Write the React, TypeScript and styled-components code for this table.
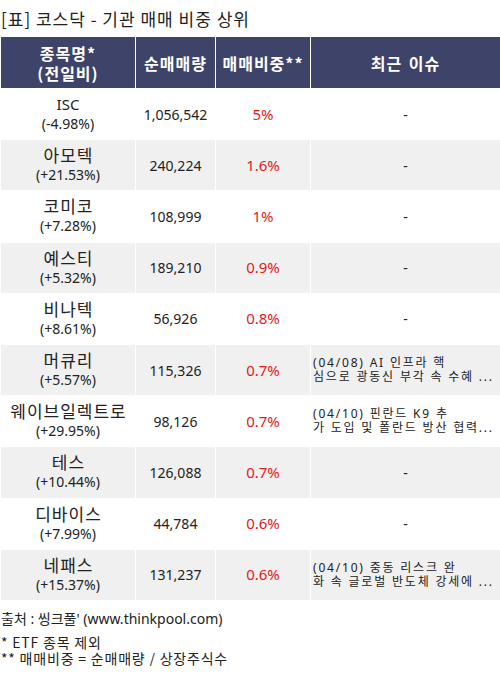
import React from "react";
import styled, { createGlobalStyle } from "styled-components";

const Global = createGlobalStyle`
  html, body { margin: 0; padding: 0; background: #fff; }
  body { font-family: "Noto Sans", "Noto Sans CJK KR", sans-serif; color: #222; }
`;

const Page = styled.div`
  width: 500px;
  padding-left: 1px;
  box-sizing: border-box;
`;

const Title = styled.div`
  height: 37px;
  display: flex;
  align-items: center;
  font-family: "Noto Sans CJK KR", "Noto Sans", sans-serif;
  font-size: 17px;
  letter-spacing: 1px;
  color: #222;
  padding-bottom: 1px;
  box-sizing: border-box;
`;

const Table = styled.div`
  display: flex;
  flex-direction: column;
  gap: 1px;
  background: #fff;
`;

const Row = styled.div<{ $head?: boolean }>`
  display: grid;
  grid-template-columns: 134px 79px 94px 1fr;
  column-gap: 1px;
  height: ${(p) => (p.$head ? "51px" : "50.2px")};
`;

const HeadCell = styled.div`
  background: #3e4469;
  color: #fff;
  font-weight: 700;
  font-size: 16px;
  line-height: 20px;
  letter-spacing: 1px;
  word-spacing: 2px;
  display: flex;
  flex-direction: column;
  align-items: center;
  justify-content: center;
  text-align: center;
  font-family: "Noto Sans CJK KR", "Noto Sans", sans-serif;
`;

const Cell = styled.div<{ $alt: boolean; $red?: boolean; $left?: boolean }>`
  background: ${(p) => (p.$alt ? "#f0f0f0" : "#ffffff")};
  color: ${(p) => (p.$red ? "#e3191c" : "#222")};
  font-size: ${(p) => (p.$red ? "15px" : "14px")};
  line-height: 19px;
  display: flex;
  flex-direction: column;
  align-items: ${(p) => (p.$left ? "flex-start" : "center")};
  justify-content: center;
  text-align: ${(p) => (p.$left ? "left" : "center")};
  padding: ${(p) => (p.$left ? "0 2px" : "0")};
  overflow: hidden;
  white-space: nowrap;
`;

const Name = styled.span<{ $latin: boolean }>`
  font-family: "Noto Sans", "Noto Sans CJK KR", sans-serif;
  font-size: ${(p) => (p.$latin ? "15px" : "17px")};
  letter-spacing: ${(p) => (p.$latin ? "0" : "1px")};
  margin-right: ${(p) => (p.$latin ? "0" : "-1px")};
`;

const IssueLine = styled.span`
  display: block;
  font-size: 12px;
  line-height: 14px;
  letter-spacing: 1.8px;
  white-space: nowrap;
  font-family: "Noto Sans", "Noto Sans CJK KR", sans-serif;
`;

const Footer = styled.div`
  margin-top: 10px;
  color: #222;
`;

const Source = styled.div`
  font-size: 14px;
  line-height: 18px;
  margin-bottom: 6px;
`;

const Note = styled.div`
  font-family: "Noto Sans CJK KR", "Noto Sans", sans-serif;
  font-size: 14px;
  line-height: 16px;
  letter-spacing: 0.8px;
`;

type RowData = {
  name: string;
  chg: string;
  vol: string;
  pct: string;
  issue: string[] | null;
};

const rows: RowData[] = [
  { name: "ISC", chg: "(-4.98%)", vol: "1,056,542", pct: "5%", issue: null },
  { name: "아모텍", chg: "(+21.53%)", vol: "240,224", pct: "1.6%", issue: null },
  { name: "코미코", chg: "(+7.28%)", vol: "108,999", pct: "1%", issue: null },
  { name: "예스티", chg: "(+5.32%)", vol: "189,210", pct: "0.9%", issue: null },
  { name: "비나텍", chg: "(+8.61%)", vol: "56,926", pct: "0.8%", issue: null },
  {
    name: "머큐리",
    chg: "(+5.57%)",
    vol: "115,326",
    pct: "0.7%",
    issue: ["(04/08) AI 인프라 핵", "심으로 광동신 부각 속 수혜 ..."],
  },
  {
    name: "웨이브일렉트로",
    chg: "(+29.95%)",
    vol: "98,126",
    pct: "0.7%",
    issue: ["(04/10) 핀란드 K9 추", "가 도입 및 폴란드 방산 협력..."],
  },
  { name: "테스", chg: "(+10.44%)", vol: "126,088", pct: "0.7%", issue: null },
  { name: "디바이스", chg: "(+7.99%)", vol: "44,784", pct: "0.6%", issue: null },
  {
    name: "네패스",
    chg: "(+15.37%)",
    vol: "131,237",
    pct: "0.6%",
    issue: ["(04/10) 중동 리스크 완", "화 속 글로벌 반도체 강세에 ..."],
  },
];

export default function App() {
  return (
    <Page>
      <Global />
      <Title>[표] 코스닥 - 기관 매매 비중 상위</Title>
      <Table>
        <Row $head>
          <HeadCell>
            <span>종목명*</span>
            <span>(전일비)</span>
          </HeadCell>
          <HeadCell>순매매량</HeadCell>
          <HeadCell>매매비중**</HeadCell>
          <HeadCell>최근 이슈</HeadCell>
        </Row>
        {rows.map((r, i) => {
          const alt = i % 2 === 1;
          return (
            <Row key={r.name}>
              <Cell $alt={alt}>
                <Name $latin={/^[A-Za-z]+$/.test(r.name)}>{r.name}</Name>
                <span>{r.chg}</span>
              </Cell>
              <Cell $alt={alt}>{r.vol}</Cell>
              <Cell $alt={alt} $red>
                {r.pct}
              </Cell>
              {r.issue ? (
                <Cell $alt={alt} $left>
                  {r.issue.map((l) => (
                    <IssueLine key={l}>{l}</IssueLine>
                  ))}
                </Cell>
              ) : (
                <Cell $alt={alt}>-</Cell>
              )}
            </Row>
          );
        })}
      </Table>
      <Footer>
        <Source>출처 : 씽크풀' (www.thinkpool.com)</Source>
        <Note>* ETF 종목 제외</Note>
        <Note>** 매매비중 = 순매매량 / 상장주식수</Note>
      </Footer>
    </Page>
  );
}
